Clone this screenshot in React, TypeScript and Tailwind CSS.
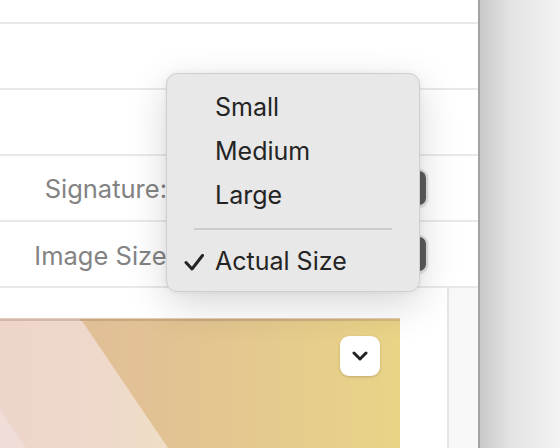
import React from "react";

function Divider() {
  return <div className="h-[2px] w-full bg-[#e9e9e9]" />;
}

function Row({ label, labelClass, gapClass }: { label: string; labelClass: string; gapClass: string }) {
  return (
    <div className="flex h-[64px] items-center">
      <div className={`shrink-0 whitespace-nowrap text-right text-[25.5px] text-[#838383] ${labelClass}`}>{label}</div>
      <div className={`h-[38px] w-[248px] rounded-[9px] border-[2px] border-[#e0e0e0] bg-[#5c5c5c] shadow-[0_1px_2px_rgba(0,0,0,0.15)] ${gapClass}`} />
    </div>
  );
}

function Picture() {
  return (
    <svg width="400" height="130" viewBox="0 0 400 130" className="block">
      <defs>
        <linearGradient id="pink" x1="0" y1="0" x2="1" y2="0">
          <stop offset="0" stopColor="#eed5cb" />
          <stop offset="0.45" stopColor="#eed7cc" />
          <stop offset="1" stopColor="#efdec6" />
        </linearGradient>
        <linearGradient id="tan" x1="0" y1="0" x2="1" y2="0">
          <stop offset="0" stopColor="#dfbb9c" />
          <stop offset="0.45" stopColor="#e2c392" />
          <stop offset="1" stopColor="#e9d487" />
        </linearGradient>
        <linearGradient id="edge" x1="0" y1="0" x2="1" y2="0">
          <stop offset="0" stopColor="#c6a585" />
          <stop offset="0.6" stopColor="#c8ab80" />
          <stop offset="1" stopColor="#d3bb78" />
        </linearGradient>
      </defs>
      <rect x="0" y="0" width="400" height="130" fill="url(#tan)" />
      <polygon points="0,0 80,0 168,130 0,130" fill="url(#pink)" />
      <polygon points="0,92 26,130 0,130" fill="#f0ddd7" />
      <rect x="0" y="0" width="400" height="1" fill="#e6cdb8" />
      <rect x="0" y="1" width="400" height="2" fill="url(#edge)" />
      <rect x="0" y="1" width="80" height="2" fill="#d2b8ad" />
    </svg>
  );
}

export default function App() {
  return (
    <div className="relative flex h-[448px] w-[560px] overflow-hidden bg-white font-['Inter',sans-serif]">
      <div className="flex w-[478px] flex-col bg-white">
        <div className="h-[22px]" />
        <Divider />
        <div className="h-[64px]" />
        <Divider />
        <div className="h-[64px]" />
        <Divider />
        <Row label="Signature:" labelClass="w-[167px] pt-[2px]" gapClass="ml-[13px]" />
        <Divider />
        <Row label="Image Size:" labelClass="w-[174px] pt-[4px]" gapClass="ml-[6px]" />
        <Divider />
        <div className="flex flex-1">
          <div className="w-[447px] bg-white pt-[30px]">
            <div className="relative w-[400px]">
              <Picture />
              <div className="absolute left-[340px] top-[18px] flex h-[40px] w-[40px] items-center justify-center rounded-[9px] bg-white shadow-[0_1px_3px_rgba(0,0,0,0.18)]">
                <svg width="16" height="10" viewBox="0 0 16 10">
                  <polyline points="2,2 8,8 14,2" fill="none" stroke="#222" strokeWidth="3" strokeLinecap="round" strokeLinejoin="round" />
                </svg>
              </div>
            </div>
          </div>
          <div className="w-[2px] bg-[#e6e6e6]" />
          <div className="flex-1 bg-[#f8f8f8]" />
        </div>
      </div>
      <div className="w-[2px] bg-[#a3a3a3]" />
      <div className="flex-1 bg-linear-to-r from-[#c8c8c8] via-[#e2e2e2] via-35% to-[#f3f3f3]" />

      <div className="absolute left-[166px] top-[73px] flex h-[219px] w-[254px] flex-col rounded-[11px] border border-[#cfcfcf] bg-[#e8e8e8] pt-[12px] text-[25px] text-[#242424] shadow-[0_12px_40px_rgba(0,0,0,0.16),0_0_6px_rgba(0,0,0,0.06)]">
        <div className="flex h-[44px] items-center pl-[48px]">Small</div>
        <div className="flex h-[44px] items-center pl-[48px]">Medium</div>
        <div className="flex h-[44px] items-center pl-[48px]">Large</div>
        <div className="flex h-[22px] items-center px-[27px]">
          <div className="h-[2px] w-full bg-[#cdcdcd]" />
        </div>
        <div className="relative flex h-[44px] items-center pl-[48px]">
          <svg className="absolute left-[17px] top-[14px]" width="20" height="17" viewBox="0 0 20 17">
            <polyline points="2,8.5 8,15 18.5,1.5" fill="none" stroke="#242424" strokeWidth="3" strokeLinecap="round" strokeLinejoin="round" />
          </svg>
          Actual Size
        </div>
      </div>
    </div>
  );
}
